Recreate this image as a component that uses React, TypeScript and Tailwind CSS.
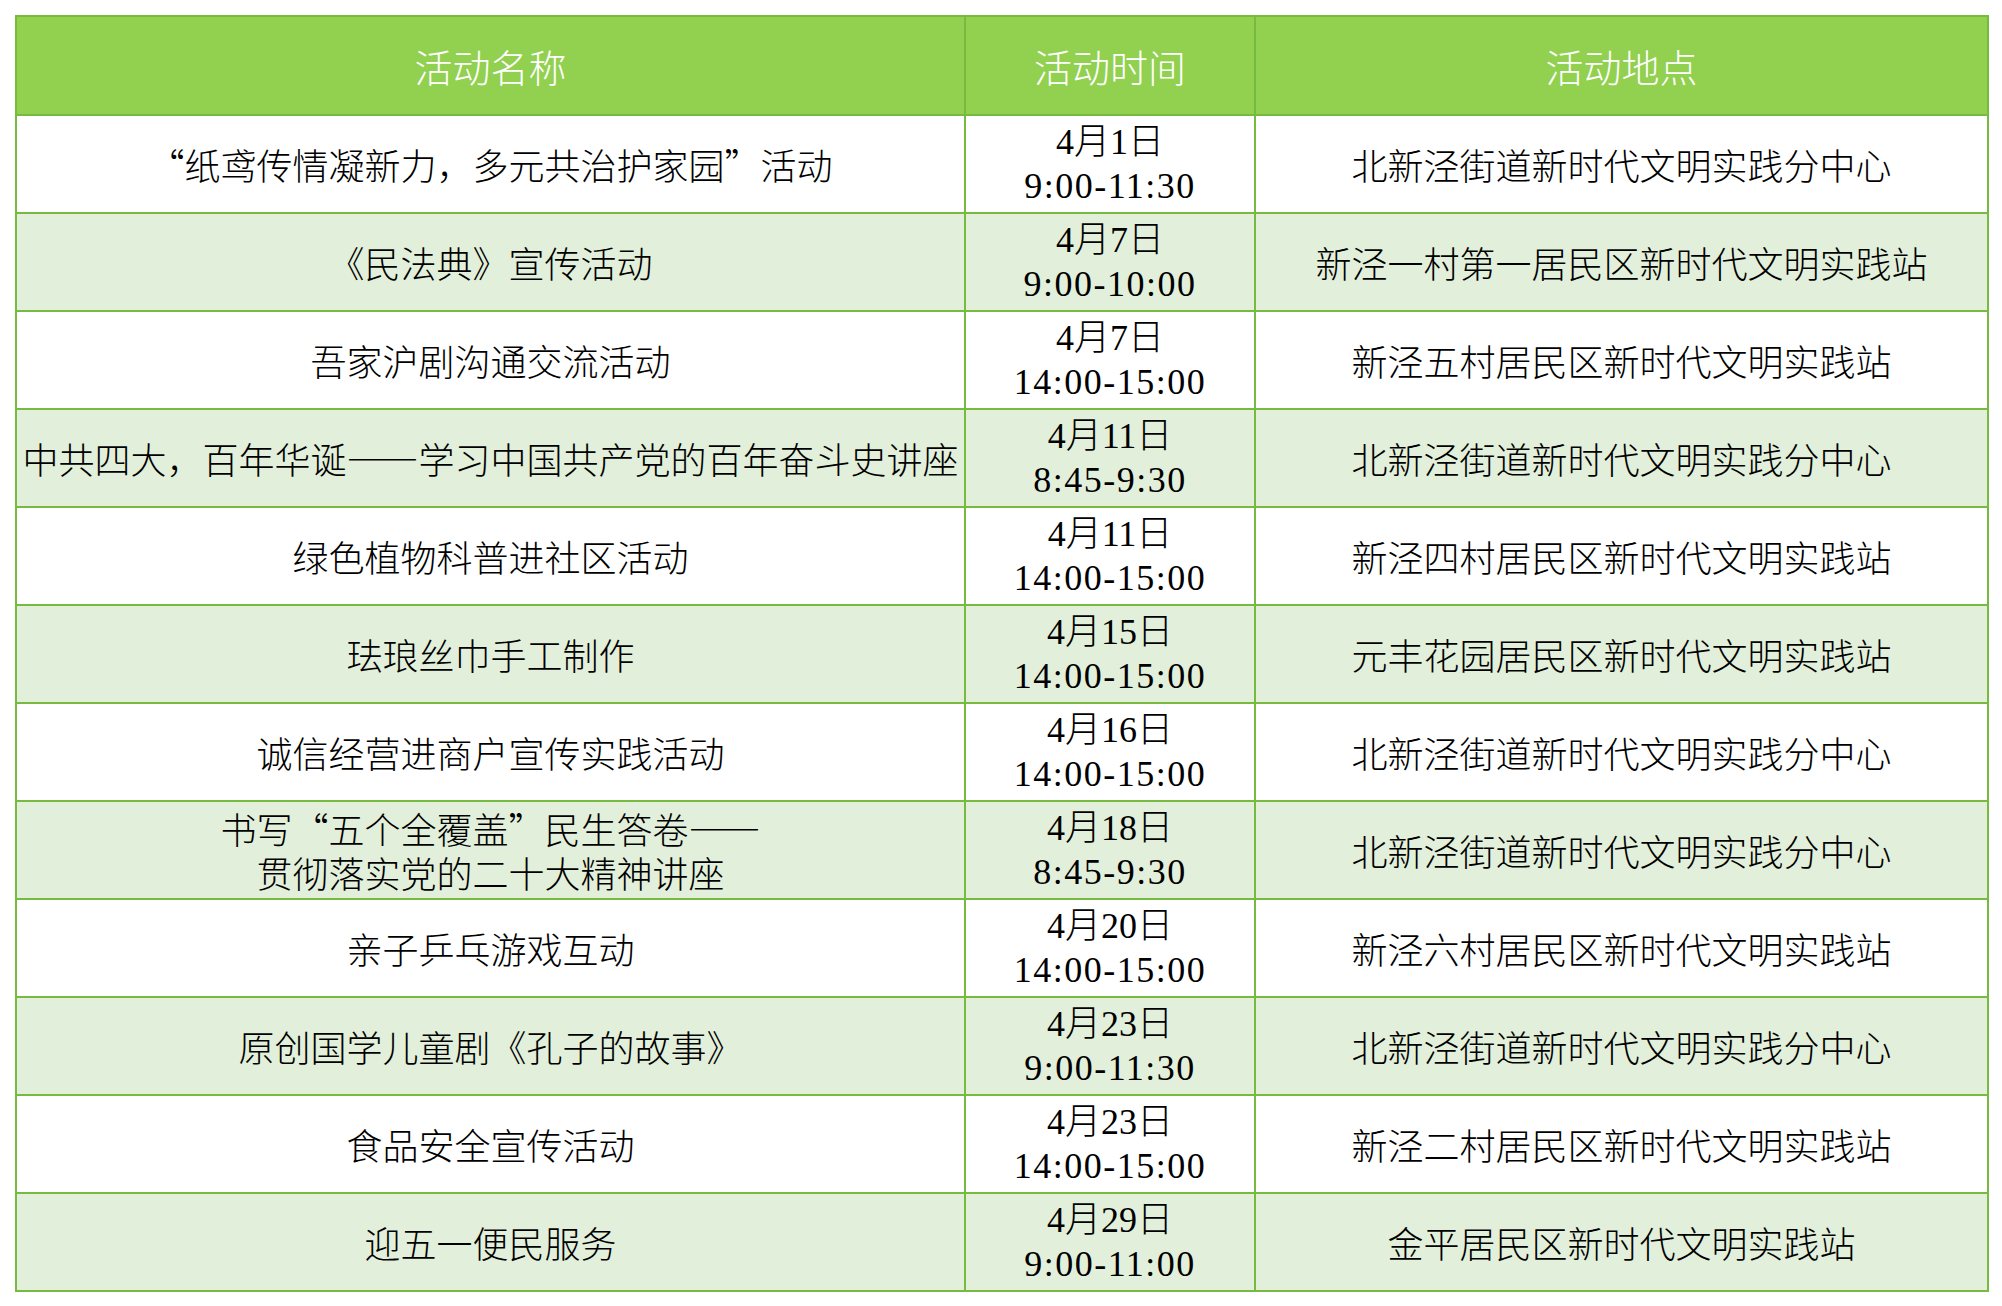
import React from "react";

type Row = {
  name: React.ReactNode;
  date: string;
  time: string;
  place: string;
};

const rows: Row[] = [
  { name: "“纸鸢传情凝新力，多元共治护家园”活动", date: "4月1日", time: "9:00-11:30", place: "北新泾街道新时代文明实践分中心" },
  { name: "《民法典》宣传活动", date: "4月7日", time: "9:00-10:00", place: "新泾一村第一居民区新时代文明实践站" },
  { name: "吾家沪剧沟通交流活动", date: "4月7日", time: "14:00-15:00", place: "新泾五村居民区新时代文明实践站" },
  { name: "中共四大，百年华诞——学习中国共产党的百年奋斗史讲座", date: "4月11日", time: "8:45-9:30", place: "北新泾街道新时代文明实践分中心" },
  { name: "绿色植物科普进社区活动", date: "4月11日", time: "14:00-15:00", place: "新泾四村居民区新时代文明实践站" },
  { name: "珐琅丝巾手工制作", date: "4月15日", time: "14:00-15:00", place: "元丰花园居民区新时代文明实践站" },
  { name: "诚信经营进商户宣传实践活动", date: "4月16日", time: "14:00-15:00", place: "北新泾街道新时代文明实践分中心" },
  {
    name: (
      <>
        <span className="block">书写“五个全覆盖”民生答卷——</span>
        <span className="block">贯彻落实党的二十大精神讲座</span>
      </>
    ),
    date: "4月18日",
    time: "8:45-9:30",
    place: "北新泾街道新时代文明实践分中心",
  },
  { name: "亲子乒乓游戏互动", date: "4月20日", time: "14:00-15:00", place: "新泾六村居民区新时代文明实践站" },
  { name: "原创国学儿童剧《孔子的故事》", date: "4月23日", time: "9:00-11:30", place: "北新泾街道新时代文明实践分中心" },
  { name: "食品安全宣传活动", date: "4月23日", time: "14:00-15:00", place: "新泾二村居民区新时代文明实践站" },
  { name: "迎五一便民服务", date: "4月29日", time: "9:00-11:00", place: "金平居民区新时代文明实践站" },
];

export default function App() {
  return (
    <div
      lang="zh-CN"
      className="min-h-screen bg-white pl-[15px] pt-[15px] font-['Noto_Sans_CJK_SC',sans-serif] font-light text-black"
    >
      <table className="w-[1972px] table-fixed border-collapse border-2 border-[#76bb40] text-[36px] leading-[44px]">
        <colgroup>
          <col className="w-[949px]" />
          <col className="w-[290px]" />
          <col className="w-[733px]" />
        </colgroup>
        <thead>
          <tr className="h-[99px] bg-[#92d050] text-[38px] text-white">
            <th className="border-2 border-[#76bb40] font-light">活动名称</th>
            <th className="border-2 border-[#76bb40] font-light">活动时间</th>
            <th className="border-2 border-[#76bb40] font-light">活动地点</th>
          </tr>
        </thead>
        <tbody>
          {rows.map((row, i) => (
            <tr key={i} className={`h-[98px] ${i % 2 === 1 ? "bg-[#e2efda]" : "bg-white"}`}>
              <td className="whitespace-nowrap border-2 border-[#76bb40] px-0 text-center">
                {row.name}
              </td>
              <td className="border-2 border-[#76bb40] px-0 text-center font-['Liberation_Serif','Noto_Sans_CJK_SC',serif]">
                <div>{row.date}</div>
                <div className="tracking-[1.5px]">{row.time}</div>
              </td>
              <td className="whitespace-nowrap border-2 border-[#76bb40] px-0 text-center">
                {row.place}
              </td>
            </tr>
          ))}
        </tbody>
      </table>
    </div>
  );
}
